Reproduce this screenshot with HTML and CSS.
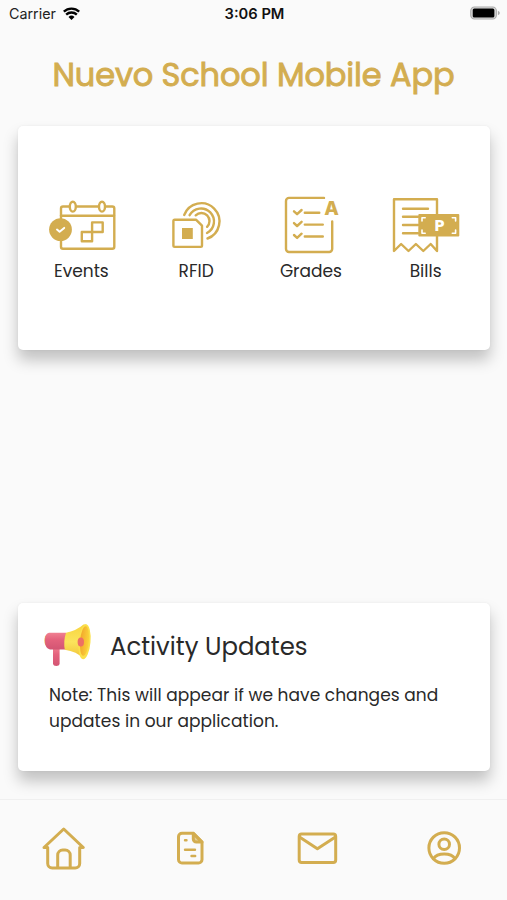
FILE: index.html
```html
<!DOCTYPE html>
<html lang="en">
<head>
<meta charset="utf-8">
<title>Nuevo School Mobile App</title>
<link rel="stylesheet" href="styles.css">
</head>
<body>
<header class="status">
  <div class="carrier"><span class="carrier-name">Carrier</span>
    <svg class="wifi" viewBox="0 0 20 16"><path d="M10 15 6.8 11.6a4.6 4.6 0 0 1 6.4 0Z"/><path class="wave" d="M4.3 9.2a8.2 8.2 0 0 1 11.4 0M1.8 6a12 12 0 0 1 16.4 0"/></svg>
  </div>
  <span class="time">3:06 PM</span>
  <svg class="battery" viewBox="0 0 31 14"><rect x=".8" y=".8" width="26.4" height="12.4" rx="3.8"/><path class="tip" d="M28.8 4.6q2 .8 2 2.4t-2 2.4Z"/><rect class="charge" x="2.8" y="2.4" width="22.4" height="9.2" rx="1.6"/></svg>
</header>
<h1 class="title">Nuevo School Mobile App</h1>
<main class="content">
  <section class="card menu">
    <a class="item">
      <svg class="icon" viewBox="36 192 90 66">
        <rect x="61" y="206.500" width="53.300" height="42.300" rx="2"/><path d="M61 215.700h53"/>
        <ellipse class="ring" cx="72.800" cy="206.700" rx="3" ry="4.900"/><ellipse class="ring" cx="102" cy="206.700" rx="3" ry="4.900"/>
        <rect x="81.800" y="232" width="10.300" height="9.300"/><rect x="92.100" y="222.400" width="10.600" height="9.600"/>
        <circle class="solid" cx="60.500" cy="229.600" r="11.400"/><path class="white-line" d="m57 229.600 2.600 2.200 4.600-3.900"/>
      </svg><span class="label">Events</span></a>
    <a class="item">
      <svg class="icon" viewBox="151 192 90 66">
        <path d="M174.700 219.800h21.500l5.800 5.800v20a1.300 1.300 0 0 1-1.300 1.300h-26a1.300 1.300 0 0 1-1.300-1.300v-24.500a1.300 1.300 0 0 1 1.300-1.300Z"/>
        <rect class="solid" x="182" y="228" width="10.800" height="11"/>
        <path d="M184.200 215a18.200 18.200 0 1 1 23.300 23.500M189.600 215.200a13 13 0 1 1 17.400 17.800M195.700 215.300a8 8 0 0 1 11.400 11.500"/>
      </svg><span class="label">RFID</span></a>
    <a class="item">
      <svg class="icon" viewBox="266 192 90 66">
        <path d="M324 197.900H289a3 3 0 0 0-3 3V249a3 3 0 0 0 3 3h40.200a3 3 0 0 0 3-3v-27.500M304.800 212.800h14.500M304.800 224.600h18M304.800 236.500h18M294 211.300l3.100 2.900 4.500-4.200M294 223.100l3.100 2.900 4.500-4.200M294 235l3.100 2.900 4.500-4.200"/>
        <text class="grade" x="331.500" y="214.800">A</text>
      </svg><span class="label">Grades</span></a>
    <a class="item">
      <svg class="icon" viewBox="381 192 90 66">
        <path d="M394 251v-51.800h43V251l-6.300-7-7.400 7-7.400-7-7.400 7-7.400-7ZM403 208.700h25M403 216.800h15M403 225h15M403 233.200h15"/>
        <rect class="solid" x="418.300" y="214" width="41" height="22.500" rx="1"/>
        <path class="white-line corners" d="M422 221v-3.200h3.200M452.300 217.800h3.300v3.200M455.600 230v3.300h-3.300M425.200 233.300H422V230"/>
        <text class="peso" x="439.500" y="230.800">P</text>
      </svg><span class="label">Bills</span></a>
  </section>
  <section class="card notice">
    <div class="notice-head">
      <svg class="horn" viewBox="40 620 56 50">
        <defs>
          <linearGradient id="pink" x1="0" y1="0" x2="0" y2="1"><stop stop-color="#f08091"/><stop offset=".4" stop-color="#e4627d"/><stop offset="1" stop-color="#d35573"/></linearGradient>
          <linearGradient id="cone" x1="0" y1="0" x2="0" y2="1"><stop stop-color="#f8d43e"/><stop offset=".5" stop-color="#fbe45c"/><stop offset="1" stop-color="#f0c236"/></linearGradient>
          <linearGradient id="bell"><stop stop-color="#f2a72c"/><stop offset="1" stop-color="#fbd43a"/></linearGradient>
        </defs>
        <path fill="url(#pink)" d="M53 647h6.600v17q-.4 2-3.300 2t-3.300-2Z"/>
        <ellipse cx="47.200" cy="640.500" rx="2.800" ry="6" fill="#e8b54a"/>
        <path fill="url(#pink)" d="M49 632.800h17v16.600H50q-5-1-5-8.500t4-8.100Z"/>
        <path fill="url(#cone)" d="M66 632.700q10-1.600 17.500-8.100h3L84 659.100q-7.500-7.800-19.200-9.300-1.600-8.600 1.200-17.100Z"/>
        <ellipse cx="84.500" cy="641.800" rx="6" ry="17.500" transform="rotate(5 84.500 641.800)" fill="#fbe04a"/>
        <ellipse cx="84.500" cy="641" rx="4.400" ry="14.800" transform="rotate(5 84.500 641)" fill="url(#bell)"/>
        <ellipse cx="80.800" cy="642" rx="3.200" ry="4.600" fill="#ed7064"/>
      </svg>
      <h2 class="heading">Activity Updates</h2>
    </div>
    <p class="note">Note: This will appear if we have changes and<br>updates in our application.</p>
  </section>
</main>
<nav class="tabs">
  <a class="tab"><svg class="icon nav-icon" viewBox="32.500 818 60 60"><path d="m43.500 847.500 19.700-18.500 19.600 18.500h-3.600v16a4.500 4.500 0 0 1-4.500 4.500h-23a4.500 4.500 0 0 1-4.500-4.500v-16Z"/><path d="M57.200 867.500V855a5 5 0 0 1 5-5h2.500a5 5 0 0 1 5 5v12.500"/></svg></a>
  <a class="tab"><svg class="icon nav-icon" viewBox="160.500 818 60 60"><path d="M182.500 833.300h11.300l8.700 8.700v17.500a3.500 3.500 0 0 1-3.500 3.500h-16.500a3.500 3.500 0 0 1-3.500-3.500v-22.700a3.500 3.500 0 0 1 3.500-3.500Z"/><path class="fold" d="M193.800 833.300v5.700a3 3 0 0 0 3 3h5.700Z"/><path class="thin" d="M185.500 840.300h1.500M185.500 849.700h10M192 856h3.700"/></svg></a>
  <a class="tab"><svg class="icon nav-icon" viewBox="287 818 60 60"><rect x="299.200" y="834" width="36.500" height="28.500" rx="2.500"/><path d="m299.500 837 17.900 11.700 18-11.700"/></svg></a>
  <a class="tab"><svg class="icon nav-icon" viewBox="413.500 818 60 60"><circle cx="443.700" cy="848" r="15.300"/><circle cx="443.700" cy="844.300" r="5.300"/><path d="M433 858.500c2-3.200 5.500-4.500 10.700-4.500s8.700 1.300 10.700 4.500"/></svg></a>
</nav>
</body>
</html>
```
FILE: styles.css
```css
* { box-sizing: border-box; }
body {
  margin: 0;
  height: 900px;
  display: flex;
  flex-direction: column;
  background: #fafafa;
  color: #292929;
  font-family: Poppins, Inter, "Liberation Sans", sans-serif;
  overflow: hidden;
}
.status {
  height: 28px;
  padding: 0 7px 1px 9px;
  display: grid;
  grid-template-columns: 1fr auto 1fr;
  align-items: center;
  font-family: Inter, sans-serif;
  font-size: 14.3px;
  color: #222;
}
.carrier { display: flex; align-items: center; gap: 6px; }
.wifi { width: 19px; height: 15px; fill: #000; margin-top: -1px; }
.wave { fill: none; stroke: #000; stroke-width: 2.5; }
.time { font-size: 14.7px; font-weight: 600; color: #111; }
.battery { width: 30px; height: 14px; justify-self: end; margin-top: -1px; fill: #ddd; stroke: #aaa; stroke-width: 1.2; }
.tip { fill: #aaa; stroke: none; }
.charge { fill: #000; stroke: none; }
.title {
  margin: 0;
  height: 98px;
  padding-top: 27px;
  text-align: center;
  color: #d3ad50;
  font-size: 32px;
  line-height: 40px;
  font-weight: 400;
  letter-spacing: -.1px;
  -webkit-text-stroke: .9px #d3ad50;
  white-space: nowrap;
}
.content {
  height: 673px;
  padding: 0 17px 28px 18px;
  display: flex;
  flex-direction: column;
  justify-content: space-between;
}
.card {
  background: #fff;
  border-radius: 5px;
  box-shadow: 0 10px 15px rgba(0, 0, 0, .23), 0 0 3px rgba(0, 0, 0, .05);
}
.menu { height: 224px; padding: 66px 7px 0 6px; display: grid; grid-template-columns: repeat(4, 1fr); }
.item { display: flex; flex-direction: column; align-items: center; }
.icon {
  width: 90px;
  height: 66px;
  fill: none;
  stroke: #d3ad50;
  stroke-width: 2.4;
  stroke-linecap: round;
  stroke-linejoin: round;
}
.solid { fill: #d3ad50; stroke: none; }
.ring { fill: #fff; }
.white-line { stroke: #fff; stroke-width: 2; }
.corners { stroke-width: 1.6; }
.grade, .peso { stroke: none; text-anchor: middle; font-family: Inter, sans-serif; font-weight: 800; }
.grade { fill: #d3ad50; font-size: 19px; }
.peso { fill: #fff; font-family: Poppins, sans-serif; font-size: 16px; font-weight: 700; }
.label { font-size: 17px; line-height: 26px; white-space: nowrap; }
.notice { height: 168px; padding: 17px 20px 0 22px; }
.notice-head { display: flex; align-items: center; height: 50px; }
.horn { width: 56px; height: 50px; }
.heading { margin: 2px 0 0 14px; font-size: 24.4px; font-weight: 400; white-space: nowrap; }
.note { margin: 12px 0 0 9px; font-size: 17px; line-height: 26px; letter-spacing: .05px; white-space: nowrap; }
.tabs { flex: 1; border-top: 1px solid #f0f0f0; padding-top: 18px; display: grid; grid-template-columns: repeat(4, 1fr); justify-items: center; }
.nav-icon { width: 60px; height: 60px; stroke-width: 3; }
.thin { stroke-width: 2.4; }
.fold { fill: #d3ad50; fill-opacity: .6; }
```
